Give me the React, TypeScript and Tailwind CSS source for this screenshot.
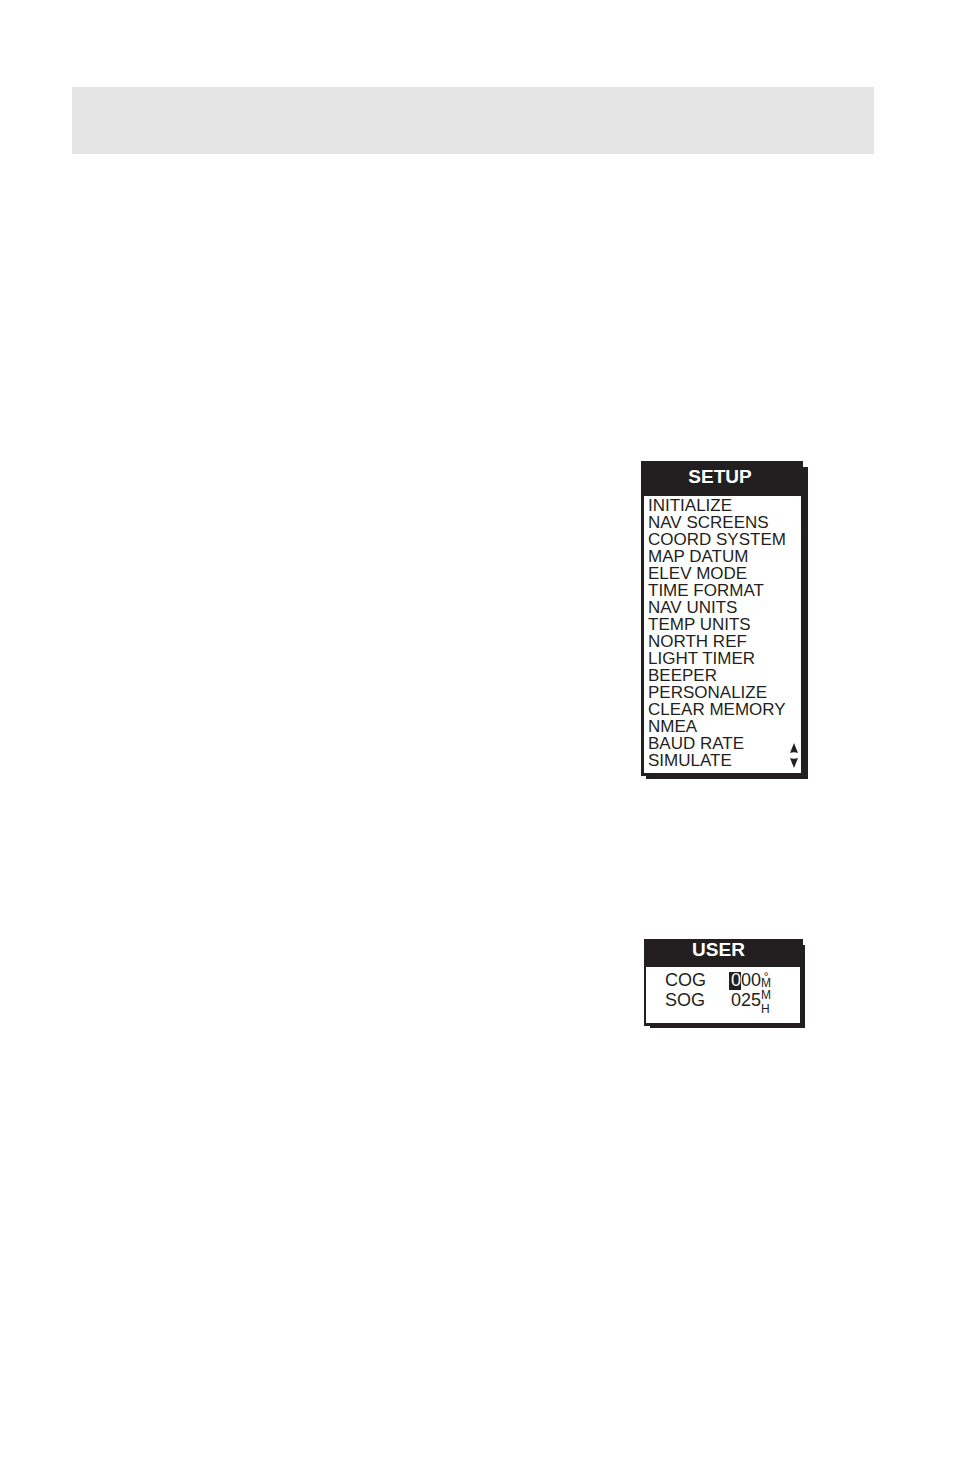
import type { ReactNode } from "react";

const SETUP_ITEMS = [
  "INITIALIZE",
  "NAV SCREENS",
  "COORD SYSTEM",
  "MAP DATUM",
  "ELEV MODE",
  "TIME FORMAT",
  "NAV UNITS",
  "TEMP UNITS",
  "NORTH REF",
  "LIGHT TIMER",
  "BEEPER",
  "PERSONALIZE",
  "CLEAR MEMORY",
  "NMEA",
  "BAUD RATE",
  "SIMULATE",
];

// Card and its hard shadow share one grid cell, the margins set them apart
function Panel({
  shadow,
  card,
  children,
}: {
  shadow: string;
  card: string;
  children: ReactNode;
}) {
  return (
    <section className="grid">
      <div className={`col-start-1 row-start-1 bg-[#231f20] ${shadow}`} />
      <div className={`col-start-1 row-start-1 bg-[#231f20] ${card}`}>
        {children}
      </div>
    </section>
  );
}

function SetupPanel() {
  return (
    <Panel shadow="mt-[6px] ml-[5px]" card="mr-[5px] mb-[3px] px-[3px] pb-[3px]">
      <h2 className="h-[35px] pr-1 text-center text-[19px] leading-8 font-bold text-white">
        SETUP
      </h2>
      <div className="relative mr-[-1px] bg-white pt-px pb-1 pl-1">
        <ul>
          {SETUP_ITEMS.map((item) => (
            <li key={item} className="flex">
              <button className="text-[17px] leading-[17px] whitespace-nowrap">
                {item}
              </button>
            </li>
          ))}
        </ul>
        <div className="absolute right-[3px] bottom-[5px] flex flex-col gap-[5px]">
          <button aria-label="Scroll up">
            <svg viewBox="0 0 8 10" className="block h-[10px] w-2">
              <path d="M4 0 8 10Q4 8.6 0 10Z" fill="#231f20" />
            </svg>
          </button>
          <button aria-label="Scroll down">
            <svg viewBox="0 0 8 10" className="block h-[10px] w-2">
              <path d="M4 10 8 0Q4 1.4 0 0Z" fill="#231f20" />
            </svg>
          </button>
        </div>
      </div>
    </Panel>
  );
}

function UserPanel() {
  return (
    <Panel shadow="mt-[6px] ml-[6px]" card="mr-[2px] mb-[2px] pr-[3px] pb-[3px] pl-[2px]">
      <h2 className="h-7 pr-[9px] text-center text-[19px] leading-[22px] font-bold text-white">
        USER
      </h2>
      <dl className="grid h-14 grid-cols-[64px_1fr] content-start bg-white pt-[3px] pl-[19px] text-[18px] leading-5">
        <dt>COG</dt>
        <dd className="flex">
          <span className="mt-[2px] h-[18px] bg-[#231f20] pl-[2px] leading-4 text-white">
            0
          </span>
          <span>00</span>
          <span className="flex flex-col items-center text-[12px] leading-[14px]">
            <span className="h-[6px]">°</span>
            <span className="h-[14px]">M</span>
          </span>
        </dd>
        <dt>SOG</dt>
        <dd className="flex pl-[2px]">
          <span>025</span>
          <span className="-mt-[2px] flex h-5 flex-col text-[12px] leading-[14px]">
            <span>M</span>
            <span>H</span>
          </span>
        </dd>
      </dl>
    </Panel>
  );
}

export default function App() {
  return (
    <main className="min-h-screen bg-white pt-[87px] pr-20 pl-[72px] font-['Liberation_Sans',Arial,sans-serif] text-[#231f20]">
      <header className="h-[67px] bg-[#e4e4e4]" />
      <div className="mt-[307px] mr-[66px] ml-auto flex w-[167px] flex-col gap-40">
        <SetupPanel />
        <div className="px-[3px]">
          <UserPanel />
        </div>
      </div>
    </main>
  );
}
